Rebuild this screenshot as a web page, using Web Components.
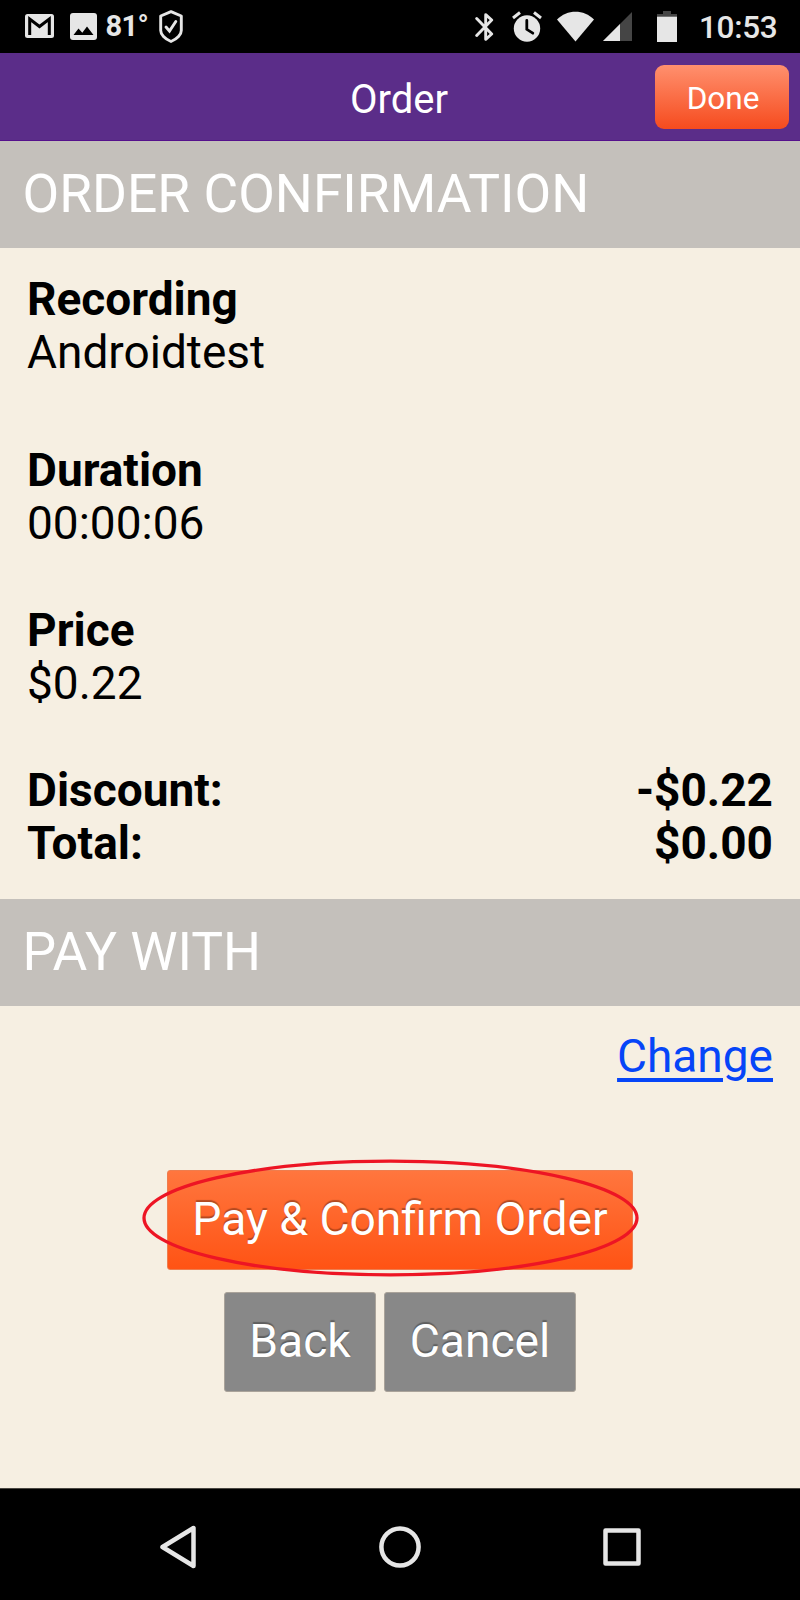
<!DOCTYPE html>
<html lang="en"><head><meta charset="utf-8"><title>Order</title>
<style>html,body{margin:0;padding:0}body{width:800px;height:1600px;overflow:hidden;background:#f6efe2;font-family:Roboto,sans-serif}</style></head>
<body><order-screen></order-screen>
<script>
const define=(name,css,html)=>customElements.define(name,class extends HTMLElement{
  constructor(){super();this.attachShadow({mode:'open'}).innerHTML=`<style>*{box-sizing:border-box}${css}</style>${html}`;}
});

define('status-bar',`
:host{display:flex;justify-content:space-between;height:53px;background:#000;color:#e6e6e6}
div{display:flex;align-items:flex-start}
svg{display:block;flex:none}
.temp{font:700 29px/34px Roboto,sans-serif;letter-spacing:-.6px;margin:9px 0 0 8.500px;width:43.500px;white-space:nowrap}
.time{font:500 31.500px/38px Roboto,sans-serif;letter-spacing:-.3px;margin:9px 0 0 22px;width:101px;white-space:nowrap}
`,`
<div>
<svg style="margin:14px 0 0 25px" width="29" height="24" viewBox="0 0 29 24"><rect width="29" height="24" rx="2.5" fill="#e6e6e6"/><path d="M4.700 21V5l9.800 7.500L24.300 5v16" fill="none" stroke="#000" stroke-width="3"/></svg>
<svg style="margin:13px 0 0 16px" width="27" height="27" viewBox="0 0 27 27"><rect width="27" height="27" rx="3" fill="#e6e6e6"/><path d="M3.500 22l5-6.500 3.800 4.300L17 13.500l6.500 8.500z" fill="#000"/></svg>
<span class="temp">81°</span>
<svg style="margin:10px 0 0 10px" width="24" height="33" viewBox="0 0 24 33"><path d="M12 1.600L22.300 6v14.500c0 4-4 8.500-10.300 11C5.700 29 1.700 24.500 1.700 20.500V6z" fill="none" stroke="#e6e6e6" stroke-width="2.900" stroke-linejoin="round"/><path d="M7 17l3.500 4 6.300-9.500" fill="none" stroke="#e6e6e6" stroke-width="2.900" stroke-linecap="round"/></svg>
</div>
<div>
<svg style="margin:12px 0 0" width="20" height="30" viewBox="0 0 20 30"><path d="M1.700 6.500l15 15.500-6 5.300V2.700l6 5.300-15 15.500" fill="none" stroke="#e6e6e6" stroke-width="2.900" stroke-linecap="round" stroke-linejoin="round"/></svg>
<svg style="margin:11px 0 0 17px" width="30" height="31" viewBox="0 0 30 31"><circle cx="15" cy="17.500" r="13.200" fill="#e6e6e6"/><path d="M1 7l7-5.500M29 7l-7-5.500" stroke="#e6e6e6" stroke-width="3"/><path d="M14.800 9.500v8.800l6 3.900" fill="none" stroke="#000" stroke-width="2.800" stroke-linecap="round"/></svg>
<svg style="margin:11px 0 0 15px" width="37" height="31" viewBox="0 0 37 31"><path d="M0 8.500C10-2 27-2 37 8.500L18.500 30.500z" fill="#e6e6e6"/></svg>
<svg style="margin:12px 0 0 9px" width="29" height="29" viewBox="0 0 29 29"><path d="M0 29L29 0v29z" fill="#454545"/><path d="M0 29l17-17v17z" fill="#e6e6e6"/></svg>
<svg style="margin:11px 0 0 25px" width="20" height="31" viewBox="0 0 20 31"><path d="M6 0h8v3h6v2H0V3h6z" fill="#454545"/><path d="M0 5.500h20V31H0z" fill="#e6e6e6"/></svg>
<span class="time">10:53</span>
</div>`);

define('title-bar',`
:host{display:grid;grid-template-columns:1fr auto 1fr;height:88px;background:#5b2d89;border-bottom:1px solid #55118c;color:#fff}
h1{grid-column:2;margin:24px 2px 0 0;font:400 40px/46px Roboto,sans-serif}
button{justify-self:end;margin:12px 11px 0 0;width:134px;height:64px;padding:2px 0 0 2px;border:0;border-radius:9px;background:linear-gradient(#ff906e,#f64b1e);color:#fff;font:400 31.500px/64px Roboto,sans-serif}
`,`<h1><slot></slot></h1><button><slot name="action"></slot></button>`);

define('section-heading',`
:host{display:block;height:107px;padding:1px 0 0 22.500px;background:#c4c0bb;color:#fff}
h2{margin:0;font:400 53.330px/105px Roboto,sans-serif;white-space:nowrap}
`,`<h2><slot></slot></h2>`);

define('detail-field',`
:host{display:block;font-size:46px;line-height:53.330px;color:#000}
b,span{display:block}
`,`<b><slot name="label"></slot></b><span><slot></slot></span>`);

define('total-row',`
:host{display:flex;justify-content:space-between;font-size:46px;line-height:53.330px;font-weight:700}
`,`<span><slot></slot></span><span><slot name="amount"></slot></span>`);

define('action-button',`
:host{display:block}
button{display:block;width:100%;height:100px;padding:0 0 2px;border:1px solid #aaa39a;border-radius:3px;background:#888;color:#fff;font:400 46.200px/94px Roboto,sans-serif;text-shadow:0 -2px 1px rgba(0,0,0,.3);white-space:nowrap}
:host([primary]) button{border-color:#ee7d4e;background:linear-gradient(#ff763e,#ff5314)}
`,`<button><slot></slot></button>`);

define('highlight-ring',`
:host{position:absolute;left:-25px;top:-11px;pointer-events:none}
svg{display:block}
`,`<svg width="498" height="118" viewBox="0 0 498 118"><ellipse cx="248.500" cy="59" rx="246.500" ry="56.800" fill="none" stroke="#ed1524" stroke-width="3.300"/></svg>`);

define('nav-bar',`
:host{display:flex;justify-content:space-between;align-items:center;height:112px;background:#000;padding:4px 158px 0 159px;border-top:1px solid #4a4742}
svg{display:block;fill:none;stroke:#e6e6e6;stroke-width:4.500;stroke-linejoin:round}
`,`
<svg width="38" height="44" viewBox="0 0 38 44"><path d="M3.500 22L34.500 3v38z"/></svg>
<svg width="44" height="44" viewBox="0 0 44 44"><circle cx="22" cy="22" r="18.600"/></svg>
<svg width="40" height="44" viewBox="0 0 40 44"><rect x="3.500" y="5.500" width="33" height="33"/></svg>`);

define('order-screen',`
:host{display:flex;flex-direction:column;width:800px;height:1600px;background:#f6efe2}
section-heading,status-bar,title-bar,nav-bar{flex:none}
.details{height:651px;padding:24.800px 27px 0;flex:none}
.first{margin-bottom:64.700px}
.gap{margin-bottom:53.330px}
.change{display:flex;justify-content:flex-end;padding:24.300px 27px 0;font-size:46px;line-height:53.330px}
a{color:#0645f8;text-decoration:underline;text-decoration-thickness:4px;text-underline-offset:6px}
.actions{display:flex;flex-direction:column;align-items:center;padding-top:86.370px;gap:22.500px;flex:1}
.pay{position:relative;width:466px}
.row{display:flex;gap:8px}
`,`
<status-bar></status-bar>
<title-bar>Order<span slot="action">Done</span></title-bar>
<section-heading>ORDER CONFIRMATION</section-heading>
<div class="details">
<detail-field class="first"><span slot="label">Recording</span>Androidtest</detail-field>
<detail-field class="gap"><span slot="label">Duration</span>00:00:06</detail-field>
<detail-field class="gap"><span slot="label">Price</span>$0.22</detail-field>
<total-row>Discount:<span slot="amount">-$0.22</span></total-row>
<total-row>Total:<span slot="amount">$0.00</span></total-row>
</div>
<section-heading>PAY WITH</section-heading>
<div class="change"><a>Change</a></div>
<div class="actions">
<div class="pay"><action-button primary>Pay &amp; Confirm Order</action-button><highlight-ring></highlight-ring></div>
<div class="row"><action-button style="width:152px">Back</action-button><action-button style="width:192px">Cancel</action-button></div>
</div>
<nav-bar></nav-bar>`);
</script></body></html>
